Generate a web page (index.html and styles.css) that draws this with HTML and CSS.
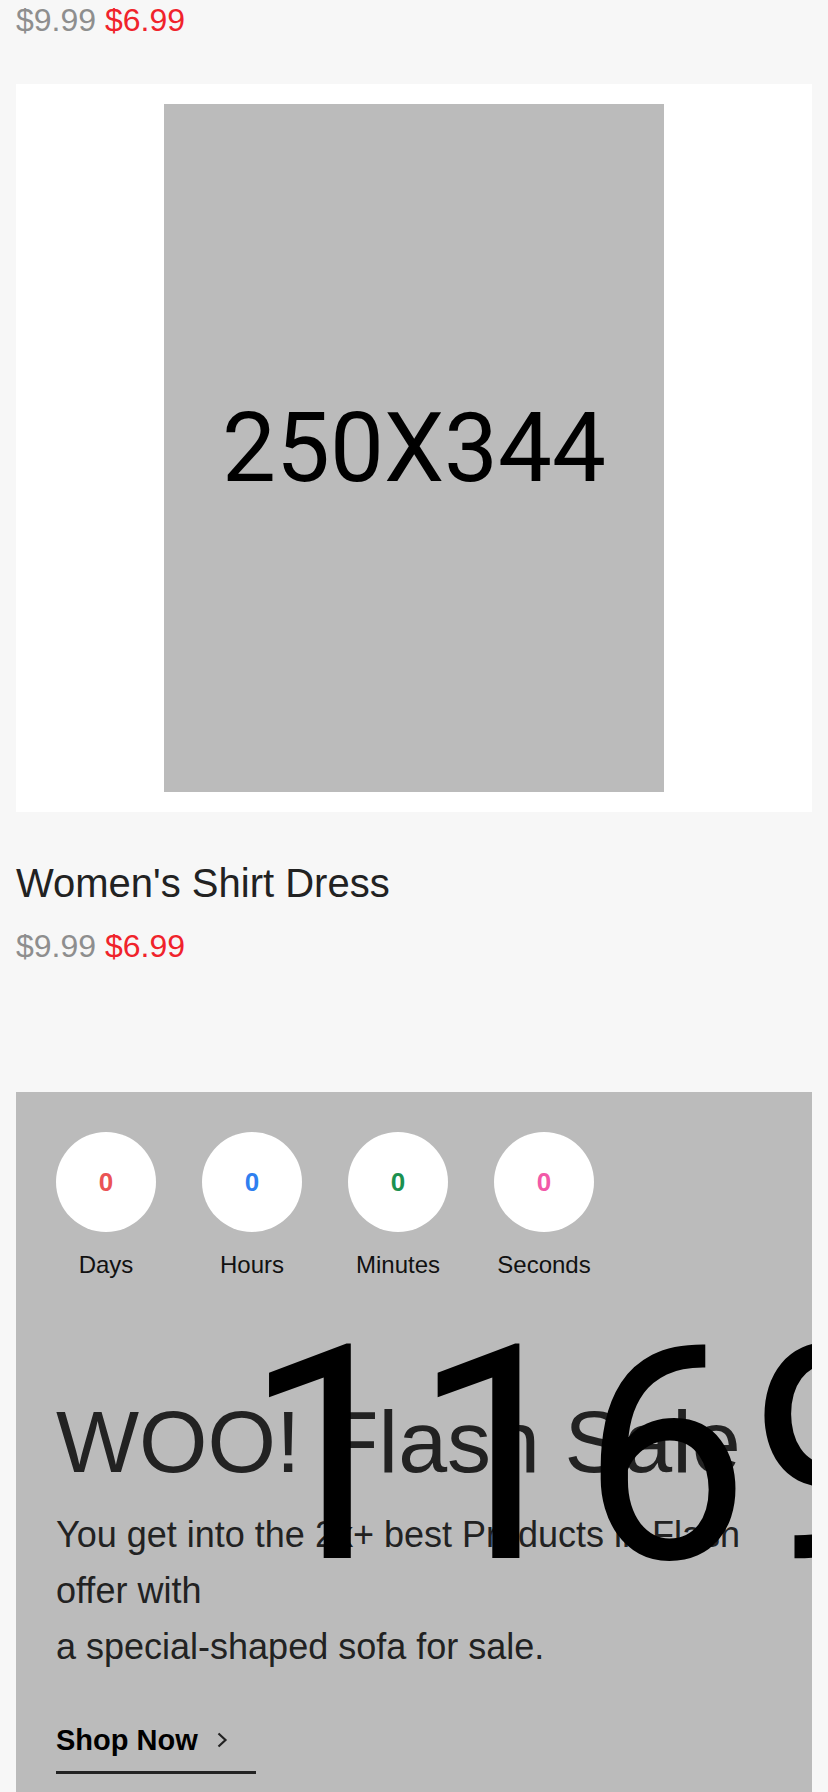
FILE: index.html
```html
<!DOCTYPE html>
<html lang="en">
<head>
<meta charset="utf-8">
<title>Shop</title>
<link rel="stylesheet" href="styles.css">
</head>
<body>
<div class="page">
  <div class="product product--partial">
    <div class="price"><span class="old">$9.99</span> <span class="new">$6.99</span></div>
  </div>
  <div class="product">
    <div class="thumb"><div class="placeholder">250X344</div></div>
    <h3 class="name">Women's Shirt Dress</h3>
    <div class="price"><span class="old">$9.99</span> <span class="new">$6.99</span></div>
  </div>
  <section class="flash">
    <div class="countdown">
      <div class="unit"><div class="circle c-red">0</div><div class="label">Days</div></div>
      <div class="unit"><div class="circle c-blue">0</div><div class="label">Hours</div></div>
      <div class="unit"><div class="circle c-green">0</div><div class="label">Minutes</div></div>
      <div class="unit"><div class="circle c-pink">0</div><div class="label">Seconds</div></div>
    </div>
    <h2 class="flash-title">WOO! Flash Sale</h2>
    <p class="flash-text">You get into the 2k+ best Products in Flash offer with<br>a special-shaped sofa for sale.</p>
    <a class="shop-now" href="#">Shop Now <svg class="chev" width="12" height="16" viewBox="0 0 12 16"><path d="M2.5 1.5 L9.5 8 L2.5 14.5" fill="none" stroke="#222" stroke-width="2.2"/></svg></a>
    <div class="big-number">1169</div>
  </section>
</div>
</body>
</html>
```
FILE: styles.css
```css
html, body {
  margin: 0;
  padding: 0;
}
body {
  background: #f7f7f7;
  font-family: "Liberation Sans", Arial, sans-serif;
  color: #222;
}
.page {
  padding: 0 16px;
}
.product--partial {
  margin-bottom: 44px;
}
.price {
  font-size: 32px;
  line-height: 40px;
}
.price .old {
  color: #8e8e8e;
}
.price .new {
  color: #f0232b;
}
.thumb {
  background: #fff;
  padding: 20px 0;
  display: flex;
  justify-content: center;
}
.placeholder {
  width: 500px;
  height: 688px;
  background: #bbbbbb;
  display: flex;
  align-items: center;
  justify-content: center;
  font-family: Roboto, "Liberation Sans", sans-serif;
  font-size: 96px;
  color: #000;
}
.name {
  margin: 47px 0 0;
  font-size: 40px;
  line-height: 48px;
  font-weight: 400;
  color: #222;
}
.product .name + .price {
  margin-top: 19px;
}
.flash {
  position: relative;
  overflow: hidden;
  margin-top: 126px;
  background: #bbbbbb;
  padding: 40px;
}
.countdown {
  display: flex;
  gap: 46px;
}
.unit {
  width: 100px;
  display: flex;
  flex-direction: column;
  align-items: center;
}
.circle {
  width: 100px;
  height: 100px;
  border-radius: 50%;
  background: #fff;
  display: flex;
  align-items: center;
  justify-content: center;
  font-size: 26px;
  font-weight: 700;
}
.c-red { color: #ea5455; }
.c-blue { color: #2f7ff0; }
.c-green { color: #1b9150; }
.c-pink { color: #f25aa8; }
.label {
  margin-top: 18px;
  font-size: 24px;
  line-height: 30px;
  color: #111;
  white-space: nowrap;
}
.flash-title {
  margin: 118px 0 0;
  font-size: 88px;
  line-height: 88px;
  font-weight: 400;
  color: #222;
}
.flash-text {
  margin: 21px 0 0;
  font-size: 36px;
  line-height: 56px;
  color: #222;
}
.shop-now {
  margin-top: 48px;
  display: flex;
  align-items: center;
  gap: 18px;
  width: 200px;
  box-sizing: border-box;
  padding-bottom: 14px;
  border-bottom: 3px solid #222;
  font-size: 29px;
  line-height: 34px;
  font-weight: 700;
  color: #000;
  text-decoration: none;
}
.chev {
  display: block;
}
.big-number {
  position: absolute;
  left: 228px;
  top: 214px;
  font-family: Roboto, sans-serif;
  font-size: 300px;
  line-height: 300px;
  color: #000;
  white-space: nowrap;
}
```
